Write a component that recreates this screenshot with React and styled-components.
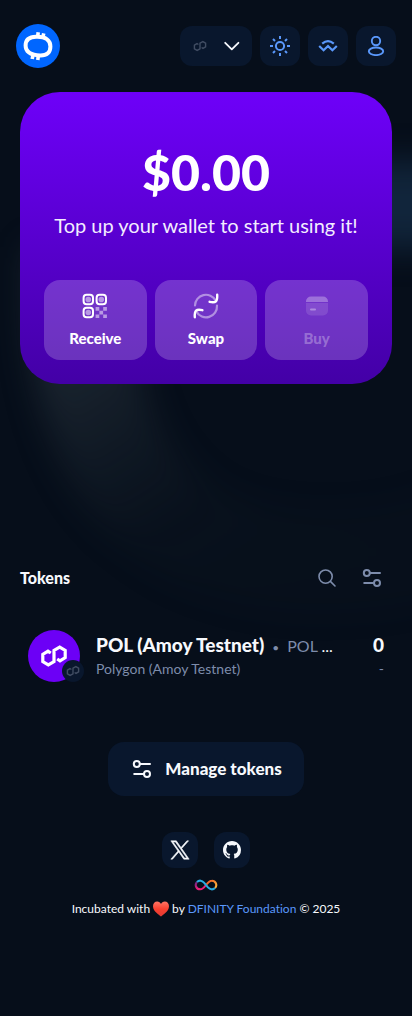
import React from 'react';
import styled, { createGlobalStyle } from 'styled-components';

const color = {
  page: '#060e1a',
  panel: '#09172d',
  blue: '#5a98fb',
  muted: '#7d8cab',
  text: '#f7f9fd',
};

const GlobalStyle = createGlobalStyle`
  *, *::before, *::after { box-sizing: border-box; }
  body {
    margin: 0;
    background: ${color.page};
    color: ${color.text};
    font-family: Lato, 'Liberation Sans', sans-serif;
    font-size: 16px;
    line-height: 24px;
    font-variant-ligatures: none;
  }
  h1, h2, h3, p, ul { margin: 0; padding: 0; }
  button { font: inherit; color: inherit; border: 0; padding: 0; background: none; cursor: pointer; }
  svg { display: block; flex: none; }
`;

const Page = styled.div`
  position: relative;
  min-height: 100vh;
  overflow: hidden;
`;

const Backdrop = styled.svg`
  position: absolute;
  top: 0;
  left: 0;
  width: 100%;
  height: 700px;
  pointer-events: none;
`;

const Content = styled.div`
  position: relative;
  display: flex;
  flex-direction: column;
`;

const Header = styled.header`
  display: flex;
  align-items: center;
  justify-content: space-between;
  padding: 24px 16px;
`;

const LogoLink = styled.a`
  display: block;
  border-radius: 50%;
`;

const Toolbar = styled.div`
  display: flex;
  gap: 8px;
`;

const ToolButton = styled.button`
  display: flex;
  align-items: center;
  justify-content: ${(p) => (p.$wide ? 'space-between' : 'center')};
  width: ${(p) => (p.$wide ? 72 : 40)}px;
  height: 40px;
  padding: 0 ${(p) => (p.$wide ? 12 : 0)}px 0 ${(p) => (p.$wide ? 10 : 0)}px;
  border-radius: 12px;
  background: ${color.panel};
  color: ${(p) => (p.$wide ? color.text : color.blue)};
`;

const NetworkDot = styled.span`
  display: flex;
  align-items: center;
  justify-content: center;
  width: 20px;
  height: 20px;
  color: #414d63;
`;

const Main = styled.main`
  display: flex;
  flex-direction: column;
  padding: 0 20px;
`;

const Hero = styled.section`
  display: flex;
  flex-direction: column;
  align-items: center;
  padding: 50px 24px 24px;
  border-radius: 40px;
  background: linear-gradient(#6e00f9, #4300a6);
  text-align: center;
`;

const Balance = styled.h1`
  font-size: 50px;
  line-height: 60px;
  font-weight: 900;
  color: #fff;
`;

const Hint = styled.p`
  margin-top: 7px;
  font-size: 20px;
  line-height: 32px;
  color: #f3edff;
`;

const Actions = styled.div`
  display: grid;
  grid-template-columns: repeat(3, 1fr);
  gap: 8px;
  width: 100%;
  margin-top: 39px;
`;

const ActionButton = styled.button`
  display: flex;
  flex-direction: column;
  align-items: center;
  gap: 6px;
  height: 80px;
  padding-top: 12px;
  border-radius: 16px;
  background: rgba(255, 255, 255, 0.2);
  color: #fff;
  font-size: 15px;
  font-weight: 900;
  line-height: 24px;

  &:disabled {
    color: rgba(255, 255, 255, 0.3);
    cursor: default;
  }
`;

const SectionHead = styled.div`
  display: flex;
  align-items: center;
  justify-content: space-between;
  margin-top: 174px;
`;

const SectionTitle = styled.h2`
  font-size: 16px;
  line-height: 24px;
  font-weight: 900;
`;

const HeadTools = styled.div`
  display: flex;
  gap: 5px;
`;

const IconButton = styled.button`
  display: flex;
  align-items: center;
  justify-content: center;
  width: 40px;
  height: 40px;
  color: ${color.muted};
`;

const TokenList = styled.ul`
  list-style: none;
  margin-top: 32px;
`;

const TokenRow = styled.li`
  display: flex;
  align-items: center;
  gap: 16px;
  padding: 0 8px;
`;

const TokenLogo = styled.div`
  position: relative;
  display: flex;
  align-items: center;
  justify-content: center;
  width: 52px;
  height: 52px;
  border-radius: 50%;
  background: #6c00f6;
  color: #fff;
`;

const NetworkBadge = styled.span`
  position: absolute;
  right: -4px;
  bottom: 0;
  display: flex;
  align-items: center;
  justify-content: center;
  width: 22px;
  height: 22px;
  border-radius: 50%;
  background: ${color.panel};
  color: #414d63;
`;

const TokenText = styled.div`
  flex: 1;
  min-width: 0;
  padding-top: 2px;
`;

const TokenLine = styled.div`
  display: flex;
  align-items: baseline;
  gap: 8px;
  height: 24px;
  color: ${color.muted};
`;

const TokenName = styled.h3`
  font-size: 19px;
  line-height: 24px;
  font-weight: 900;
  white-space: nowrap;
  color: ${color.text};
`;

const Bullet = styled.span`
  font-size: 12px;
  line-height: 20px;
`;

const Symbol = styled.span`
  line-height: 20px;
  white-space: nowrap;
`;

const More = styled.span`
  color: ${color.text};
`;

const Network = styled.p`
  font-size: 14px;
  font-weight: 400;
  line-height: 24px;
  color: ${color.muted};
`;

const Amount = styled.div`
  padding-top: 2px;
  text-align: right;
  font-size: 19px;
  line-height: 24px;
  font-weight: 900;
`;

const ManageButton = styled.button`
  display: flex;
  align-items: center;
  align-self: center;
  gap: 11px;
  height: 54px;
  margin-top: 60px;
  padding: 0 22px;
  border-radius: 16px;
  background: ${color.panel};
  font-size: 17px;
  font-weight: 900;
`;

const Footer = styled.footer`
  display: flex;
  flex-direction: column;
  align-items: center;
  padding: 36px 20px 24px;
`;

const Social = styled.div`
  display: flex;
  gap: 16px;
`;

const SocialLink = styled.a`
  display: flex;
  align-items: center;
  justify-content: center;
  width: 36px;
  height: 36px;
  border-radius: 12px;
  background: ${color.panel};
  color: ${color.text};
`;

const InfinityMark = styled.svg`
  margin-top: 11px;
`;

const Credit = styled.p`
  display: flex;
  align-items: center;
  gap: 3px;
  margin-top: 6px;
  font-size: 12px;
  line-height: 24px;
`;

const TextLink = styled.a`
  color: ${color.blue};
  text-decoration: none;
`;

const stroke = { fill: 'none', stroke: 'currentColor', strokeLinecap: 'round', strokeLinejoin: 'round' };

const BackdropArt = () => (
  <Backdrop aria-hidden="true">
    <defs>
      <filter id="soft" x="-50%" y="-50%" width="200%" height="200%" colorInterpolationFilters="sRGB">
        <feGaussianBlur stdDeviation="16" />
      </filter>
      <linearGradient id="ring" gradientUnits="userSpaceOnUse" x1="60" y1="360" x2="210" y2="600">
        <stop offset="0" stopColor="#38454f" stopOpacity=".42" />
        <stop offset="0.4" stopColor="#303d45" stopOpacity=".22" />
        <stop offset="0.7" stopColor="#26343a" stopOpacity=".08" />
        <stop offset="1" stopColor="#26343a" stopOpacity=".05" />
      </linearGradient>
    </defs>
    <path
      d="M82 250C70 450 150 562 320 562C410 562 470 540 520 490"
      fill="none" stroke="url(#ring)" strokeWidth="104" filter="url(#soft)"
    />
    <rect x="350" y="162" width="110" height="86" fill="#11253b" filter="url(#soft)" />
  </Backdrop>
);

const Logo = () => (
  <svg width="44" height="44" viewBox="0 0 44 44">
    <circle cx="22" cy="22" r="22" fill="#0066ff" />
    <path d="M20 12.8C30 12.4 34.4 16.5 34.4 22.5C34.4 28.5 31 31.6 24 31.4C14 31 9.6 27.5 9.6 21.5C9.6 16 13 13 20 12.8Z" fill="none" stroke="#fff" strokeWidth="4" />
    <path d="M22.2 8.2l-.6 5M27.700 9.400l-1 5M17.200 30l-1 5M22.400 31l-.6 5" stroke="#fff" strokeWidth="3.6" />
  </svg>
);

const Polygon = ({ size, bold }) => (
  <svg width={size} height={size} viewBox="0 0 28 28" {...stroke} strokeLinecap="butt" strokeLinejoin="miter" strokeWidth={bold ? 3.2 : 2.8}>
    <path d="M10.8 11L8 9.2L2.8 12.4V19.6L8.3 22.9L14 19.6V8.4L19.7 5.1L25.2 8.4V15.6L20 18.8L17.2 17" />
  </svg>
);

const Chevron = () => (
  <svg width="16" height="16" viewBox="0 0 16 16" {...stroke} strokeWidth="1.8"><path d="M1.2 4.8L7.8 11.4L14.4 4.8" /></svg>
);

const Sun = () => (
  <svg width="20" height="20" viewBox="0 0 20 20" {...stroke} strokeLinecap="butt" strokeWidth="2">
    <circle cx="10" cy="10" r="4.1" />
    <path d="M10 0v3M10 17v3M0 10h3M17 10h3M3 3l2 2M15 15l2 2M17 3l-2 2M5 15l-2 2" />
  </svg>
);

const WalletConnect = () => (
  <svg width="20" height="20" viewBox="0 0 20 20" {...stroke} strokeLinecap="butt" strokeLinejoin="miter" strokeWidth="2.2">
    <path d="M4.200 7.600Q10 2.600 15.800 7.600" />
    <path d="M1.200 10L5.600 14.200L10 10L14.400 14.200L18.800 10" />
  </svg>
);

const Person = () => (
  <svg width="20" height="20" viewBox="0 0 20 20" {...stroke} strokeWidth="1.9">
    <circle cx="10" cy="5" r="4.2" />
    <ellipse cx="10" cy="15.3" rx="7.2" ry="3.8" />
  </svg>
);

const Qr = () => (
  <svg width="28" height="28" viewBox="0 0 28 28">
    <g fill="none" stroke="#fff" strokeWidth="2">
      <rect x="2.6" y="2.8" width="9.4" height="9.4" rx="3" />
      <rect x="15.6" y="2.8" width="9.4" height="9.4" rx="3" />
      <rect x="2.6" y="15.8" width="9.4" height="9.4" rx="3" />
    </g>
    <g fill="#fff" opacity=".5">
      <circle cx="7.3" cy="7.5" r="2.8" />
      <circle cx="20.3" cy="7.5" r="2.8" />
      <circle cx="7.3" cy="20.5" r="2.8" />
      <path d="M14.6 15h3.7v3.7h-3.7zM22.2 15h3.7v3.7h-3.7zM18.4 18.7h3.7v3.7h-3.7zM14.6 22.4h3.7v3.7h-3.7zM22.2 22.4h3.7v3.7h-3.7z" />
    </g>
  </svg>
);

const Swap = () => (
  <svg width="28" height="28" viewBox="0 0 28 28" {...stroke} strokeWidth="2.2">
    <path d="M3 13.5A11 11 0 0 1 23.6 8.4M25 13.5A11 11 0 0 1 4.4 19.6" opacity=".45" />
    <path d="M25.2 2.8C25.6 9.4 24 11.2 17.6 9.8M2.8 25.2C2.4 18.6 4 16.8 10.4 18.2" strokeWidth="2.4" />
  </svg>
);

const Card = () => (
  <svg width="28" height="28" viewBox="0 0 28 28" fill="#fff">
    <path d="M3 10V9.5A5 5 0 0 1 8 4.500H20A5 5 0 0 1 25 9.500V10Z" opacity=".3" />
    <path d="M3 11H25V18.500A5 5 0 0 1 20 23.500H8A5 5 0 0 1 3 18.500Z" opacity=".12" />
    <rect x="7" y="16.5" width="6" height="2" rx="1" opacity=".35" />
  </svg>
);

const Search = () => (
  <svg width="20" height="20" viewBox="0 0 20 20" {...stroke} strokeWidth="1.6">
    <circle cx="8.6" cy="8.6" r="6.6" />
    <path d="M13.4 13.4L18 18" />
  </svg>
);

const Sliders = ({ large }) => (
  <svg width={large ? 24 : 20} height={large ? 24 : 20} viewBox={large ? '-2 -2 24 24' : '0 0 20 20'} {...stroke} strokeWidth="2">
    <circle cx="4.8" cy="5" r="3" />
    <path d="M8.5 5H18M2.2 15H11.5" />
    <circle cx="15" cy="15" r="3" />
  </svg>
);

const XMark = () => (
  <svg width="20" height="20" viewBox="0 0 24 24" fill="currentColor">
    <path d="M14.1 10.3L22.3 1h-2l-7.1 8.1L7.6 1H1l8.6 12.2L1 23h2l7.5-8.6 6 8.6H23zM11.5 13.3l-.9-1.2L3.7 2.5h2.9l5.6 7.8.9 1.2 7.2 10.1h-2.9z" stroke="currentColor" strokeWidth=".7" />
  </svg>
);

const GitHub = () => (
  <svg width="18" height="18" viewBox="0 0 16 16" fill="currentColor">
    <path d="M8 0C3.58 0 0 3.58 0 8c0 3.54 2.29 6.53 5.47 7.59.4.07.55-.17.55-.38 0-.19-.01-.82-.01-1.49-2.01.37-2.53-.49-2.69-.94-.09-.23-.48-.94-.82-1.13-.28-.15-.68-.52-.01-.53.63-.01 1.08.58 1.23.82.72 1.21 1.87.87 2.33.66.07-.52.28-.87.51-1.07-1.78-.2-3.64-.89-3.64-3.95 0-.87.31-1.59.82-2.15-.08-.2-.36-1.02.08-2.12 0 0 .67-.21 2.2.82.64-.18 1.32-.27 2-.27s1.36.09 2 .27c1.53-1.04 2.2-.82 2.2-.82.44 1.1.16 1.92.08 2.12.51.56.82 1.27.82 2.15 0 3.07-1.87 3.75-3.65 3.95.29.25.54.73.54 1.48 0 1.07-.01 1.93-.01 2.2 0 .21.15.46.55.38A8.01 8.01 0 0 0 16 8c0-4.42-3.58-8-8-8" />
  </svg>
);

const InfinityLogo = () => (
  <InfinityMark width="24" height="12" viewBox="0 0 24 12" fill="none" strokeWidth="2.1">
    <defs>
      <linearGradient id="pink" gradientUnits="userSpaceOnUse" x1="3" y1="1" x2="7" y2="11"><stop offset="0" stopColor="#522785" /><stop offset=".8" stopColor="#ed1e79" /></linearGradient>
      <linearGradient id="orange" gradientUnits="userSpaceOnUse" x1="14" y1="2" x2="22" y2="8"><stop offset="0" stopColor="#f15a24" /><stop offset="1" stopColor="#fbb03b" /></linearGradient>
    </defs>
    <path d="M12 6C9.8 9 8.2 10.3 6.2 10.3A4.3 4.3 0 0 1 3 3" stroke="url(#pink)" />
    <path d="M12 6C14.2 3 15.8 1.7 17.8 1.7A4.3 4.3 0 0 1 21 9" stroke="url(#orange)" />
    <path d="M3 3C5.3.8 8 1.5 10 3.6L14 8.4C16 10.5 18.7 11.2 21 9" stroke="#29abe2" />
  </InfinityMark>
);

const Heart = () => (
  <svg width="16" height="16" viewBox="0 0 16 16" role="img" aria-label="love">
    <defs>
      <linearGradient id="heart" x1="0" y1="0" x2="0" y2="1"><stop offset="0" stopColor="#ff7464" /><stop offset=".5" stopColor="#f8402f" /><stop offset="1" stopColor="#e03a35" /></linearGradient>
    </defs>
    <path d="M8 15.6C6.5 14 0 10.5 0 5.2C0 2.5 1.9.6 4.2.6C6 .6 7.3 1.6 8 3C8.7 1.6 10 .6 11.8.6C14.1.6 16 2.5 16 5.2C16 10.5 9.5 14 8 15.6Z" fill="url(#heart)" />
  </svg>
);

export default function App() {
  return (
    <Page>
      <GlobalStyle />
      <BackdropArt />
      <Content>
        <Header>
          <LogoLink href="#home" aria-label="Home"><Logo /></LogoLink>
          <Toolbar>
            <ToolButton $wide aria-label="Select network">
              <NetworkDot><Polygon size={14} /></NetworkDot>
              <Chevron />
            </ToolButton>
            <ToolButton aria-label="Toggle theme"><Sun /></ToolButton>
            <ToolButton aria-label="WalletConnect"><WalletConnect /></ToolButton>
            <ToolButton aria-label="Account"><Person /></ToolButton>
          </Toolbar>
        </Header>

        <Main>
          <Hero>
            <Balance>$0.00</Balance>
            <Hint>Top up your wallet to start using it!</Hint>
            <Actions>
              <ActionButton><Qr />Receive</ActionButton>
              <ActionButton><Swap />Swap</ActionButton>
              <ActionButton disabled><Card />Buy</ActionButton>
            </Actions>
          </Hero>

          <SectionHead>
            <SectionTitle>Tokens</SectionTitle>
            <HeadTools>
              <IconButton aria-label="Search tokens"><Search /></IconButton>
              <IconButton aria-label="Filter tokens"><Sliders /></IconButton>
            </HeadTools>
          </SectionHead>

          <TokenList>
            <TokenRow>
              <TokenLogo>
                <Polygon size={28} bold />
                <NetworkBadge><Polygon size={14} /></NetworkBadge>
              </TokenLogo>
              <TokenText>
                <TokenLine>
                  <TokenName>POL (Amoy Testnet)</TokenName>
                  <Bullet>•</Bullet>
                  <Symbol>POL <More>...</More></Symbol>
                </TokenLine>
                <Network>Polygon (Amoy Testnet)</Network>
              </TokenText>
              <Amount>
                0
                <Network>-</Network>
              </Amount>
            </TokenRow>
          </TokenList>

          <ManageButton><Sliders large />Manage tokens</ManageButton>
        </Main>

        <Footer>
          <Social>
            <SocialLink href="#x" aria-label="X"><XMark /></SocialLink>
            <SocialLink href="#github" aria-label="GitHub"><GitHub /></SocialLink>
          </Social>
          <InfinityLogo />
          <Credit>
            <span>Incubated with</span>
            <Heart />
            <span>by <TextLink href="#dfinity">DFINITY Foundation</TextLink> © 2025</span>
          </Credit>
        </Footer>
      </Content>
    </Page>
  );
}
